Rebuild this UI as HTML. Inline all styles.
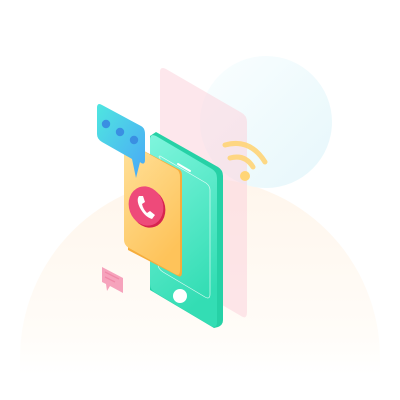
<!DOCTYPE html>
<html><head><style>html,body{margin:0;padding:0;background:#fff;width:400px;height:400px;overflow:hidden}</style></head>
<body>
<svg width="400" height="400" viewBox="0 0 400 400" xmlns="http://www.w3.org/2000/svg">
<defs>
<linearGradient id="bg" x1="0" y1="0" x2="0" y2="1">
<stop offset="0" stop-color="#fff6ec"/><stop offset="0.8" stop-color="#fffcf8"/><stop offset="1" stop-color="#fff"/></linearGradient>
<linearGradient id="circ" x1="0" y1="0" x2="1" y2="1">
<stop offset="0" stop-color="#fafeff"/><stop offset="1" stop-color="#e6f7fb"/></linearGradient>
<linearGradient id="ph" x1="0" y1="0" x2="0.3" y2="1">
<stop offset="0" stop-color="#7ff5dd"/><stop offset="1" stop-color="#33ddb4"/></linearGradient>
<linearGradient id="card" x1="0" y1="0" x2="0.5" y2="1">
<stop offset="0" stop-color="#ffe19a"/><stop offset="1" stop-color="#fec35a"/></linearGradient>
<linearGradient id="bub" x1="0" y1="0" x2="1" y2="1">
<stop offset="0" stop-color="#4fe6e0"/><stop offset="1" stop-color="#4aa8f7"/></linearGradient>
</defs>
<path d="M20 375 L20 358 A180 180 0 0 1 380 358 L380 375 Z" fill="url(#bg)"/>
<circle cx="266" cy="122" r="66" fill="url(#circ)"/>
<path d="M160 72 Q160 66 166 69 L242 113 Q247 116 247 122 L247 312 Q247 320 241 316 L166 272 Q160 268 160 262 Z" fill="#fbd3dc" opacity="0.55"/>
<!-- phone side -->
<path d="M156 132 L218 167 Q223 170 223 176 L223 320 Q223 325 218 327 L214 328 L150 290 L150 136 Z" fill="#26d1a6"/>
<path d="M150 140 Q150 133 156 136 L212 169 Q217 172 217 178 L217 322 Q217 329 211 326 L156 293 Q150 290 150 284 Z" fill="url(#ph)"/>
<path d="M160 158 Q158 156 160 156 L206 183 Q210 186 210 190 L210 294 Q210 300 205 297 L163 272 Q158 269 158 264 Z" fill="none" stroke="#fff" stroke-width="0.7" opacity="0.8"/>
<path d="M178 164 L190 171" stroke="#fff" stroke-width="2" stroke-linecap="round"/>
<circle cx="180" cy="296" r="7" fill="#fff"/>
<!-- card -->
<path d="M127 142 L180 170 Q182 171 182 176 L182 272 Q182 278 178 276 L128 250 Z" fill="#f6ad3c"/>
<path d="M124 146 Q124 140 129 143 L176 169 Q180 171 180 177 L180 270 Q180 277 175 274 L129 248 Q124 245 124 240 Z" fill="url(#card)"/>
<ellipse cx="148" cy="208" rx="17" ry="20" transform="rotate(-20 148 208)" fill="#d7244f"/>
<ellipse cx="146" cy="206" rx="17" ry="20" transform="rotate(-20 146 206)" fill="#ee4a7a"/>
<path d="M139 196 Q136 200 140 208 Q145 217 152 219 L155 215 L150 211 L147 213 Q143 209 142 204 L145 202 L143 196 Z" fill="#fff"/>
<!-- bubble -->
<path d="M97 108 Q97 102 102 105 L141 126 Q145 128 145 134 L145 160 Q145 165 141 163 L140 162 L136 178 L132 159 L102 142 Q97 139 97 134 Z" fill="url(#bub)"/>
<circle cx="106" cy="124" r="4.2" fill="#3a8fe2"/>
<circle cx="120" cy="132" r="4.2" fill="#3a8fe2"/>
<circle cx="134" cy="140" r="4.2" fill="#3a8fe2"/>
<!-- wifi -->
<g fill="none" stroke="#ffd577" stroke-width="5" stroke-linecap="round" opacity="0.9">
<path d="M225 145 Q250 138 265 162"/>
<path d="M230 158 Q245 154 253 167"/>
</g>
<circle cx="245" cy="176" r="5" fill="#ffd577"/>
<!-- small pink bubble -->
<path d="M102 267 L123 278 L123 293 L110 286 L107 291 L106 284 L102 282 Z" fill="#f6a3bc"/>
<path d="M105 272 L119 279 M105 277 L115 282" stroke="#f08aa8" stroke-width="1.3"/>
</svg>
</body></html>
